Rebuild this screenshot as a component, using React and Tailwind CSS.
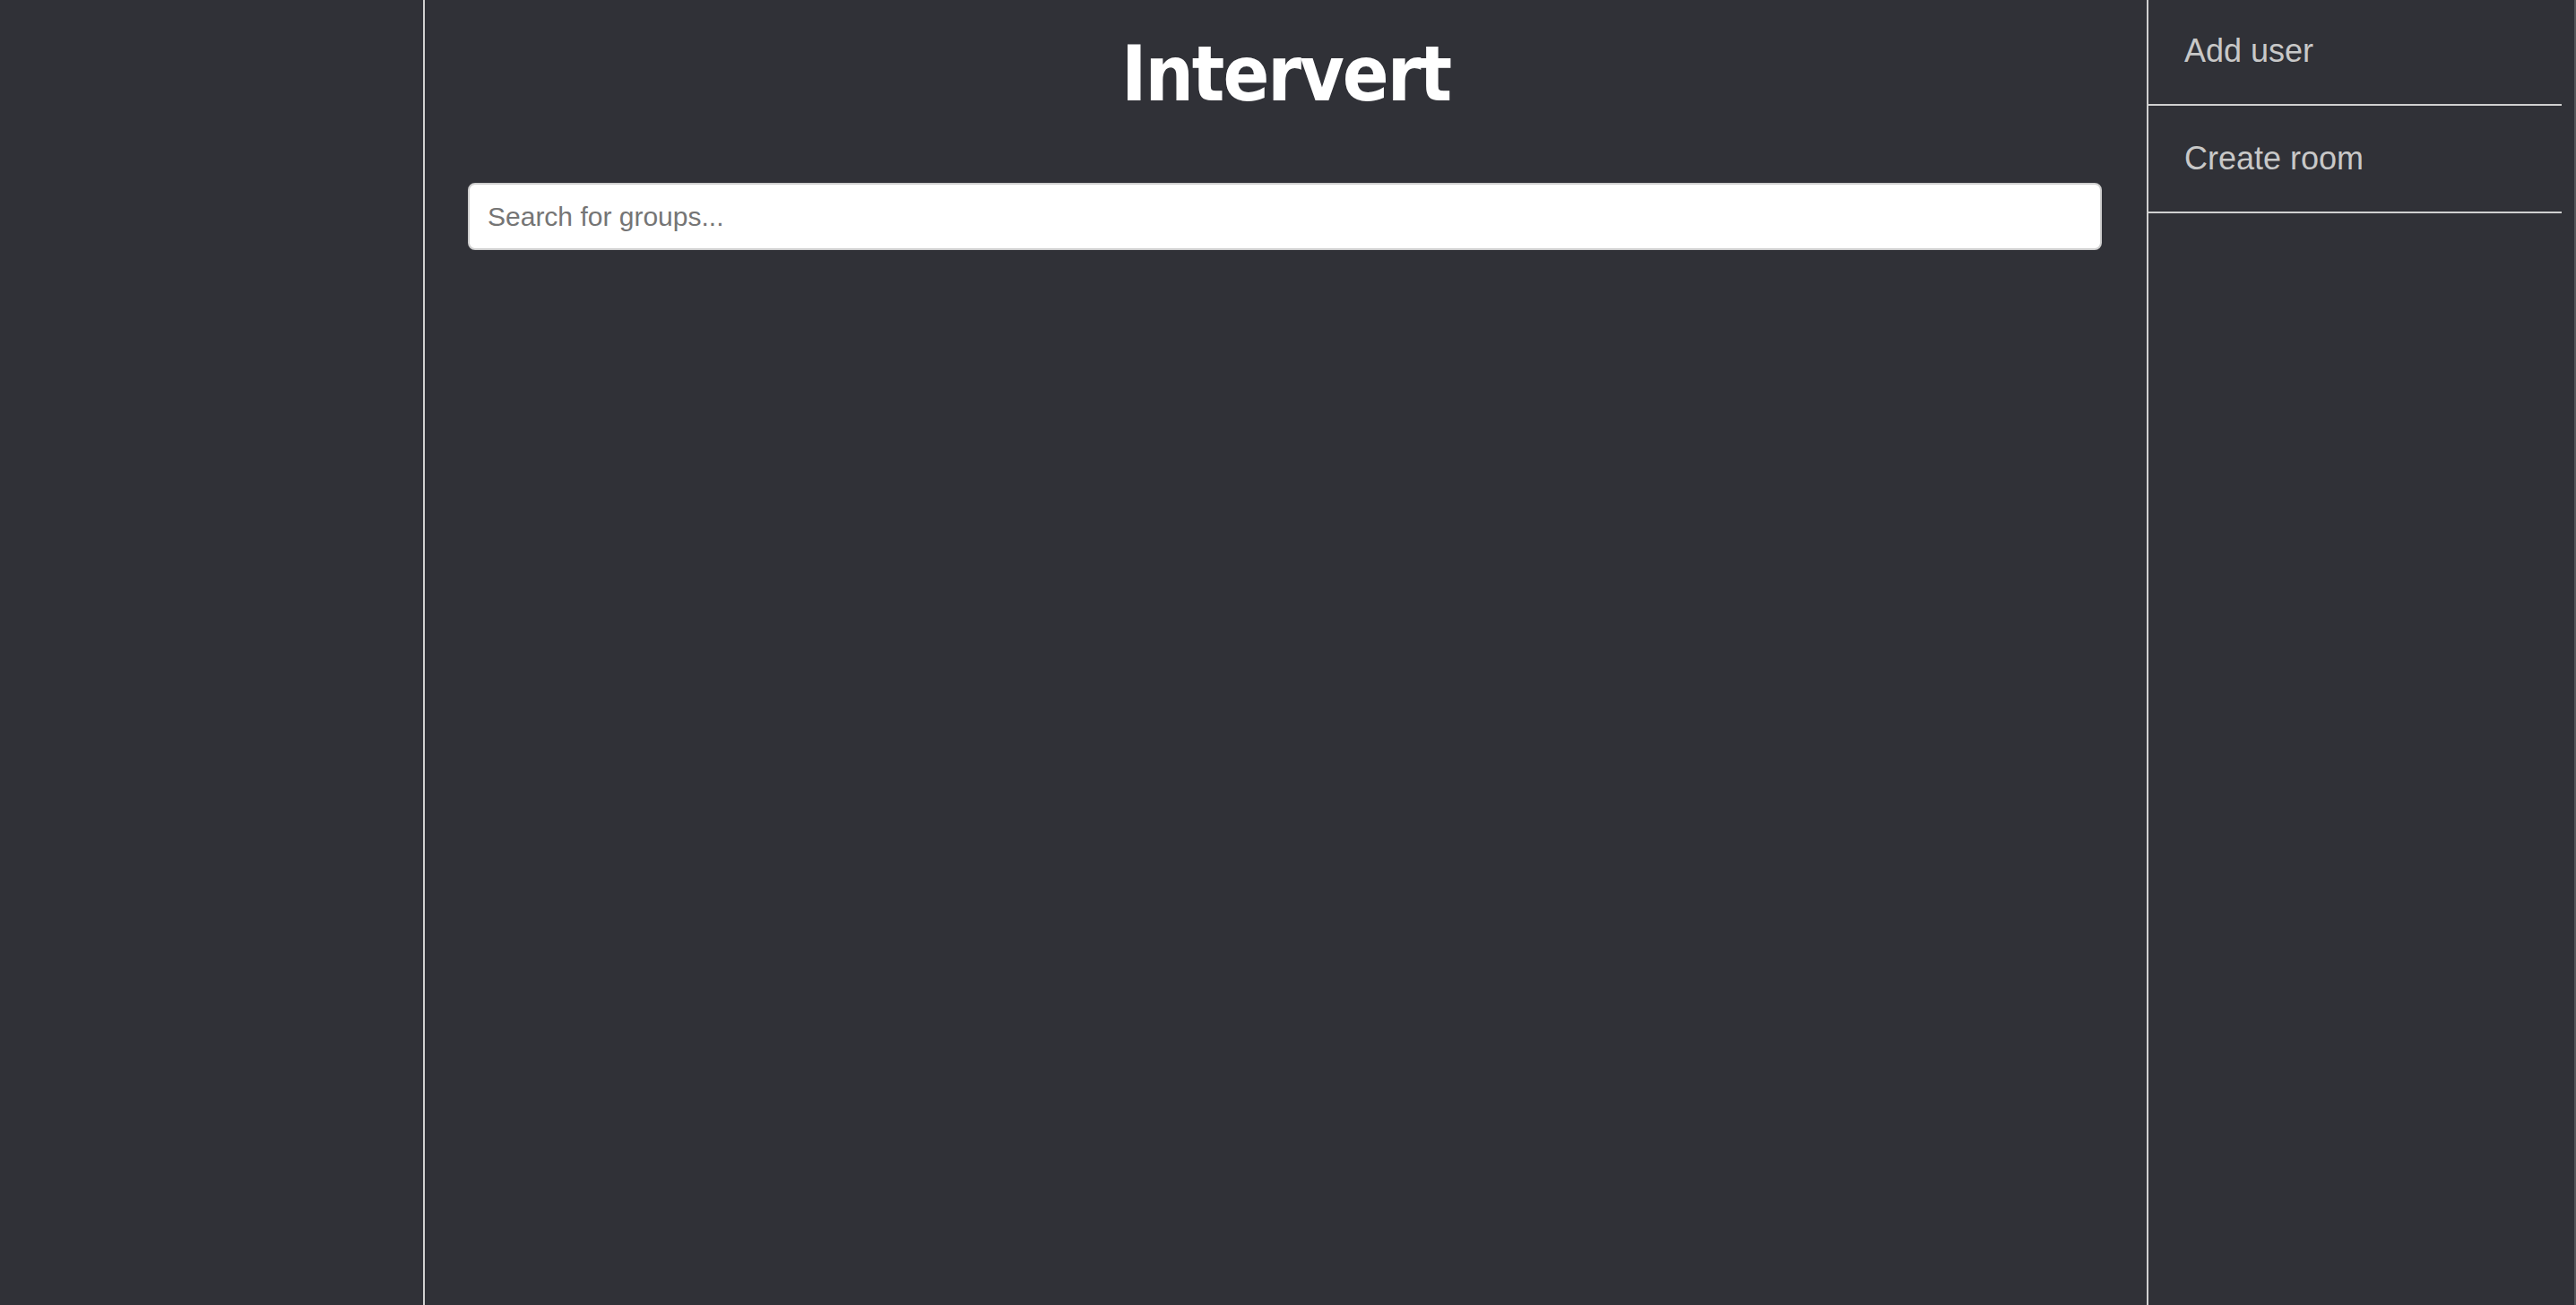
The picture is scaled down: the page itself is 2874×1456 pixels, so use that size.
import React from 'react';

const menuItems = ['Add user', 'Create room'];

export default function App() {
  return (
    <div className="flex h-[1456px] w-full bg-[#303137] font-['Liberation_Sans',Arial,sans-serif] overflow-hidden">
      {/* left column, empty */}
      <aside className="w-[474px] shrink-0 border-r-2 border-[#d0d0d0]" />

      {/* main */}
      <main className="flex-1 flex flex-col">
        <h1 className="mt-[40px] text-center text-[85px] leading-none font-bold text-white tracking-[-2px] font-['DejaVu_Sans_Condensed','DejaVu_Sans',sans-serif]">
          Intervert
        </h1>
        <div className="pl-[48px] pr-[50px] mt-[79px]">
          <input
            type="text"
            placeholder="Search for groups..."
            className="w-full h-[75px] rounded-[8px] border-2 border-[#cfcfcf] bg-white px-[20px] text-[30px] text-[#333] placeholder:text-[#757575] outline-none"
          />
        </div>
      </main>

      {/* right column */}
      <aside className="w-[479px] shrink-0 border-l-2 border-[#d0d0d0] flex">
        <nav className="flex-1 flex flex-col -mt-[2px] pr-[14px]">
          {menuItems.map((item) => (
            <a
              key={item}
              href="#"
              className="h-[120px] flex items-center pl-[40px] border-b-2 border-[#d0d0d0] text-[36px] text-[#c8c8c8]"
            >
              {item}
            </a>
          ))}
        </nav>
        <div className="w-[2px] bg-[#555659]" />
      </aside>
    </div>
  );
}
